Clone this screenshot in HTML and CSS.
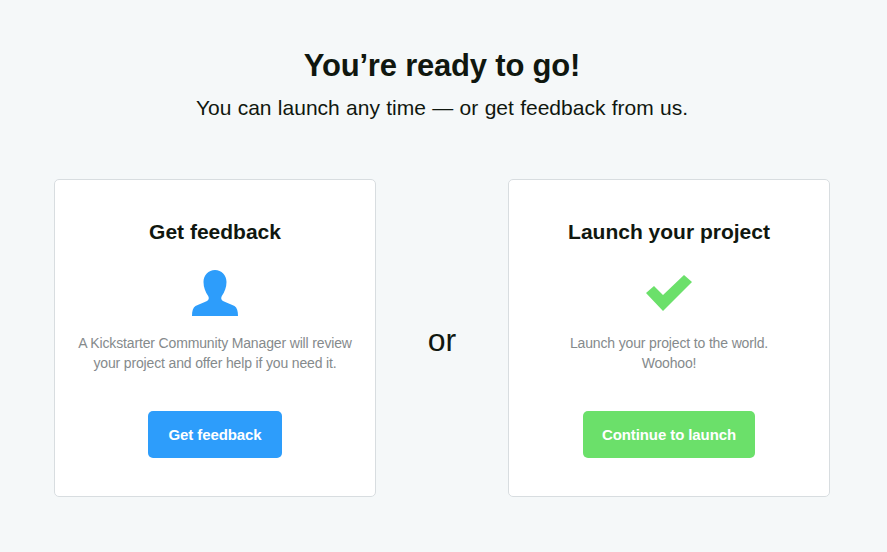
FILE: index.html
```html
<!DOCTYPE html>
<html lang="en">
<head>
  <meta charset="UTF-8">
  <meta name="viewport" content="width=device-width, initial-scale=1.0">
  <title>You're ready to go!</title>
  <link rel="stylesheet" href="styles.css">
</head>
<body>
  <div class="header">
    <h1>You’re ready to go!</h1>
    <p>You can launch any time — or get feedback from us.</p>
  </div>

  <div class="choices">
    <div class="card">
      <h2>Get feedback</h2>
      <svg class="icon" width="50" height="46" viewBox="0 0 50 46">
        <path fill="#2d9dfb" d="M25 0C31.500 0 36.500 5 36.500 12C36.500 17.500 34.500 22 31.800 26C30.800 28 31 29.800 33 31C36.500 33 41 34 44.500 36C47 37.500 48 41 48 46H2C2 41 3 37.500 5.500 36C9 34 13.500 33 17 31C19 29.800 19.200 28 18.200 26C15.500 22 13.500 17.500 13.500 12C13.500 5 18.500 0 25 0Z"/>
      </svg>
      <p>A Kickstarter Community Manager will review<br>your project and offer help if you need it.</p>
      <a href="#" class="btn btn-blue">Get feedback</a>
    </div>

    <div class="or">or</div>

    <div class="card">
      <h2>Launch your project</h2>
      <svg class="icon" width="50" height="46" viewBox="0 0 50 46">
        <path fill="#6be06a" d="M2 23L10 16L19 25L40 5L48 12L19 41Z"/>
      </svg>
      <p>Launch your project to the world.<br>Woohoo!</p>
      <a href="#" class="btn btn-green">Continue to launch</a>
    </div>
  </div>
</body>
</html>
```

FILE: styles.css
```css
body {
  font-family: "Liberation Sans", Arial, sans-serif;
  background-color: #f5f8f9;
  color: #10170f;
  margin: 0;
  padding: 0 3px 0 0;
}

.header {
  padding-top: 46px;
  text-align: center;
}

h1 {
  margin: 0;
  font-size: 31px;
  line-height: 40px;
  font-weight: bold;
  letter-spacing: -0.2px;
}

.header p {
  margin: 7px 0 0;
  font-size: 21px;
  line-height: 30px;
  word-spacing: 0.5px;
}

.choices {
  display: flex;
  justify-content: center;
  align-items: center;
  margin-top: 56px;
}

.card {
  box-sizing: border-box;
  width: 322px;
  height: 318px;
  padding: 38px 10px 0;
  background: #fff;
  border: 1px solid #d8dde0;
  border-radius: 5px;
  text-align: center;
}

.card h2 {
  margin: 0;
  font-size: 21px;
  line-height: 28px;
  font-weight: bold;
}

.icon {
  display: block;
  margin: 24px auto 0;
}

.card p {
  margin: 17px 0 0;
  font-size: 14px;
  line-height: 20px;
  letter-spacing: -0.15px;
  color: #858a8c;
}

.btn {
  display: inline-block;
  margin-top: 38px;
  padding: 0 19px;
  height: 47px;
  line-height: 47px;
  border-radius: 5px;
  color: #fff;
  font-size: 15px;
  font-weight: bold;
  letter-spacing: -0.1px;
  text-decoration: none;
}

.btn-blue {
  padding: 0 20px;
  background-color: #2d9dfb;
}

.btn-green {
  background-color: #6be06a;
}

.or {
  width: 132px;
  padding-top: 4px;
  text-align: center;
  font-size: 32px;
  line-height: 40px;
}
```
